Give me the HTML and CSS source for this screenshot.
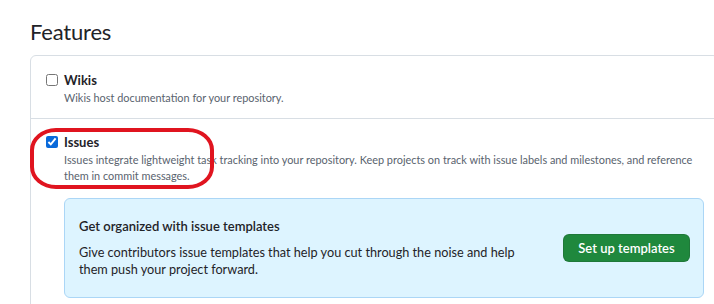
FILE: index.html
```html
<!DOCTYPE html>
<html>
<head>
<meta charset="utf-8">
<link rel="stylesheet" href="styles.css">
</head>
<body>
<main class="page">
  <h2 class="title">Features</h2>
  <section class="box">
    <div class="row">
      <input type="checkbox" class="check">
      <div class="text">
        <div class="label">Wikis</div>
        <p class="note">Wikis host documentation for your repository.</p>
      </div>
    </div>
    <div class="row row-issues">
      <input type="checkbox" class="check" checked>
      <div class="text">
        <div class="label">Issues</div>
        <p class="note">Issues integrate lightweight task tracking into your repository. Keep projects on track with issue labels and milestones, and reference them in commit messages.</p>
        <div class="flash">
          <div class="flash-text">
            <div class="flash-title">Get organized with issue templates</div>
            <p class="flash-desc">Give contributors issue templates that help you cut through the noise and help them push your project forward.</p>
          </div>
          <button class="btn">Set up templates</button>
        </div>
      </div>
    </div>
  </section>
  <div class="annotation"></div>
</main>
</body>
</html>
```
FILE: styles.css
```css
html, body {
  margin: 0;
  padding: 0;
  background: #ffffff;
  overflow: hidden;
}
body {
  font-family: Lato, "Open Sans", sans-serif;
  color: #1f2328;
}
.page {
  position: relative;
  padding: 17px 0 0 30px;
  height: 304px;
  box-sizing: border-box;
}
.title {
  margin: 0 0 8px 0;
  font-size: 22px;
  line-height: 30px;
  font-weight: 400;
  letter-spacing: -0.2px;
  color: #1f2328;
}
.box {
  width: 689px;
  border: 1px solid #d8dee4;
  border-radius: 6px;
  box-sizing: border-box;
}
.row {
  display: flex;
  align-items: flex-start;
  gap: 6px;
  padding: 14px 14px 12px 14px;
}
.row-issues {
  border-top: 1px solid #d8dee4;
  padding-top: 13px;
}
.check {
  width: 12px;
  height: 12px;
  margin: 4px 0 0 1px;
  accent-color: #0969da;
  flex: none;
}
.text {
  flex: 1;
  min-width: 0;
}
.label {
  font-size: 13px;
  font-weight: 700;
  line-height: 20px;
  color: #1f2328;
}
.note {
  margin: 0;
  max-width: 640px;
  font-size: 10.9px;
  line-height: 16px;
  color: #59636e;
}
.flash {
  margin-top: 14px;
  display: flex;
  align-items: center;
  justify-content: space-between;
  background: #ddf4ff;
  border: 1px solid #abd6f6;
  border-radius: 6px;
  padding: 17px 13px 19px 14px;
}
.flash-title {
  font-size: 13px;
  font-weight: 600;
  line-height: 20px;
  color: #1f2328;
}
.flash-desc {
  margin: 8px 0 0 0;
  max-width: 450px;
  font-size: 12.7px;
  line-height: 17px;
  color: #1f2328;
}
.btn {
  flex: none;
  width: 127px;
  height: 28px;
  border: 1px solid rgba(31, 35, 40, 0.15);
  border-radius: 6px;
  background: #1f883d;
  color: #ffffff;
  font-family: Lato, "Open Sans", sans-serif;
  font-size: 13px;
  font-weight: 600;
  padding: 0;
  margin-top: 1px;
}
.annotation {
  position: absolute;
  left: 30px;
  top: 128px;
  width: 184px;
  height: 61px;
  box-sizing: border-box;
  border: 4px solid #e0141f;
  border-radius: 26px / 22px;
  pointer-events: none;
}
```
